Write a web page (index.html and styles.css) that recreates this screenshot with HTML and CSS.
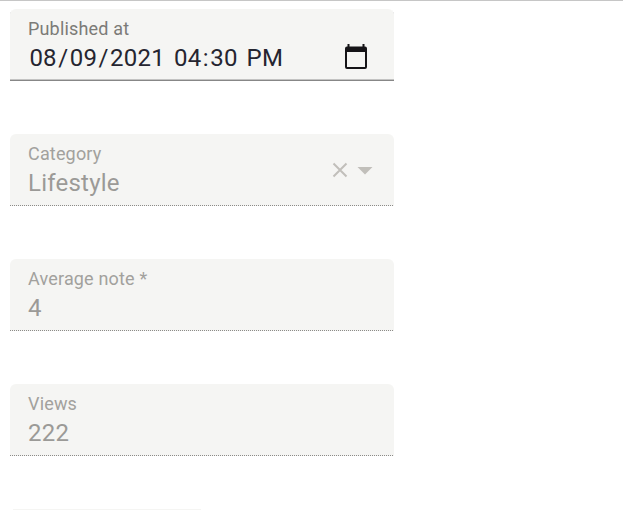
FILE: index.html
```html
<!DOCTYPE html>
<html lang="en">
<head>
<meta charset="utf-8">
<title>Post details</title>
<link rel="stylesheet" href="styles.css">
</head>
<body>
<main class="form">
  <div class="field">
    <div class="text">
      <div class="label">Published at</div>
      <div class="value date"><span>08</span>/<span>09</span>/<span>2021</span> <span>04</span>:<span>30</span> <span>PM</span></div>
    </div>
    <svg class="calendar" width="24" height="26" viewBox="0 0 24 26">
      <path fill="#151417" fill-rule="evenodd" d="M3.500 0h2v2.500h13V0h2v2.500H21q2 0 2 2V23q0 2-2 2H3q-2 0-2-2V4.500q0-2 2-2h.5zM3 8v15h18V8z"/>
    </svg>
  </div>
  <div class="field disabled">
    <div class="text">
      <div class="label">Category</div>
      <div class="value">Lifestyle</div>
    </div>
    <svg class="controls" width="42" height="16" viewBox="0 0 42 16">
      <path d="M1.500 1.500l13 13m0-13l-13 13" fill="none" stroke="#c1bfba" stroke-width="2"/>
      <path d="M25.500 5h15L33 12.500z" fill="#c1bfba"/>
    </svg>
  </div>
  <div class="field disabled">
    <div class="text">
      <div class="label">Average note *</div>
      <div class="value">4</div>
    </div>
  </div>
  <div class="field disabled">
    <div class="text">
      <div class="label">Views</div>
      <div class="value">222</div>
    </div>
  </div>
  <div class="field short"></div>
</main>
</body>
</html>
```
FILE: styles.css
```css
* {
  box-sizing: border-box;
}

body {
  margin: 0;
  background: #fff;
  font-family: Roboto, "Liberation Sans", sans-serif;
  font-weight: 400;
}

.form {
  display: flex;
  flex-direction: column;
  gap: 53px;
  height: 510px;
  overflow: hidden;
  padding: 8px 10px 0;
  border-top: 1px solid #c6c6c6;
}

.field {
  display: flex;
  justify-content: space-between;
  flex: none;
  width: 384px;
  height: 72px;
  padding: 0 18px;
  background: #f5f5f3;
  border-radius: 6px 6px 0 0;
  box-shadow: inset 0 -1px #878787, inset 0 -2px #c3c3c2;
  color: #252530;
}

.label {
  margin-top: 9px;
  font-size: 18px;
  line-height: 22px;
  letter-spacing: 0.17px;
  color: #7c7b77;
}

.value {
  font-size: 24px;
  line-height: 28px;
  margin-top: 4px;
  letter-spacing: 0.225px;
  white-space: nowrap;
}

.date span {
  padding: 0 1.4px;
}

.disabled {
  color: #9b9a97;
  box-shadow: none;
  background:
    repeating-linear-gradient(90deg, #8c8b88 0 1px, #f5f5f3 1px 2px) bottom / 100% 1px no-repeat,
    #f5f5f3;
}

.disabled .label {
  color: #a2a19d;
}

.calendar {
  margin: 35px 8px 0 0;
}

.controls {
  margin: 28px 2px 0 0;
}

.short {
  width: 188px;
  height: 1px;
  margin-left: 3px;
  border-radius: 0;
  box-shadow: none;
}
```
